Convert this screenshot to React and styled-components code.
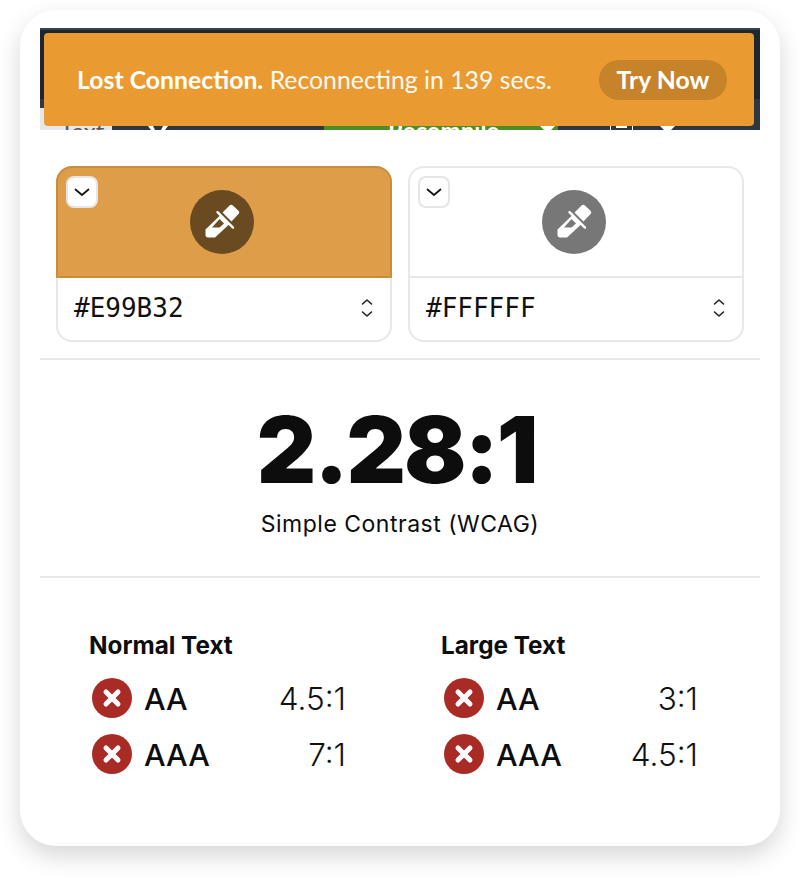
import styled, { createGlobalStyle } from "styled-components";

const GlobalStyle = createGlobalStyle`
  html, body {
    margin: 0;
    padding: 0;
    background: #fff;
  }
`;

const Page = styled.div`
  width: 800px;
  height: 878px;
  padding: 10px 20px 0;
  box-sizing: border-box;
  overflow: hidden;
  font-family: Inter, "Liberation Sans", sans-serif;
  color: #0d0d0d;
`;

const Card = styled.div`
  height: 836px;
  padding: 18px 20px 0;
  box-sizing: border-box;
  background: #fff;
  border-radius: 36px;
  box-shadow: 0 10px 24px rgba(0, 0, 0, 0.16);
`;

const ScreenshotStrip = styled.div`
  position: relative;
  height: 102px;
  overflow: hidden;
  background: linear-gradient(#3c4149 0 2px, #1e2630 2px 71px, #2f3742 71px);
`;

const FootBar = styled.div`
  position: absolute;
  left: 0;
  right: 0;
  bottom: 0;
  height: 22px;
  display: flex;
`;

const FootSegment = styled.div`
  width: ${(p) => p.$width}px;
  flex: ${(p) => (p.$grow ? "1" : "none")};
  height: 22px;
  padding: 18px 0 0 ${(p) => p.$inset || 0}px;
  box-sizing: border-box;
  display: flex;
  align-items: flex-start;
  overflow: hidden;
  background: ${(p) => p.$color};
`;

const FootLabel = styled.span`
  font-family: Lato, sans-serif;
  font-size: 24px;
  line-height: 10px;
  font-weight: ${(p) => p.$weight};
  color: ${(p) => p.$color};
  white-space: nowrap;
`;

const FootGap = styled.span`
  flex: none;
  width: ${(p) => p.$width}px;
`;

const Toast = styled.div`
  position: absolute;
  top: 5px;
  left: 4px;
  right: 6px;
  height: 93px;
  display: flex;
  align-items: center;
  justify-content: space-between;
  padding: 0 27px 0 33px;
  box-sizing: border-box;
  background: #e99b32;
  border-radius: 4px;
  font-family: Lato, sans-serif;
  font-size: 24.8px;
  color: #fff;
`;

const ToastText = styled.div`
  strong {
    font-weight: 700;
  }
  span {
    font-weight: 400;
    opacity: 0.95;
  }
`;

const TryNow = styled.div`
  width: 128px;
  height: 40px;
  display: flex;
  align-items: center;
  justify-content: center;
  border-radius: 20px;
  background: #c6832a;
  font-weight: 700;
`;

const Pickers = styled.div`
  display: grid;
  grid-template-columns: 336px 336px;
  gap: 16px;
  padding: 36px 16px 16px;
  border-bottom: 2px solid #e8e8e8;
`;

const Picker = styled.div`
  height: 176px;
  border: 2px solid #e8e8e8;
  border-radius: 16px;
  box-sizing: border-box;
  display: flex;
  flex-direction: column;
`;

const Swatch = styled.div`
  position: relative;
  flex: none;
  height: ${(p) => (p.$filled ? "112px" : "110px")};
  margin: ${(p) => (p.$filled ? "-2px -2px 0" : "0")};
  padding-right: 4px;
  display: flex;
  align-items: center;
  justify-content: center;
  box-sizing: border-box;
  background: ${(p) => (p.$filled ? "#de9d48" : "transparent")};
  border: ${(p) => (p.$filled ? "2px solid #c98c3c" : "none")};
  border-bottom: 2px solid ${(p) => (p.$filled ? "#c98c3c" : "#e8e8e8")};
  border-radius: ${(p) => (p.$filled ? "16px 16px 0 0" : "14px 14px 0 0")};
`;

const Toggle = styled.div`
  position: absolute;
  top: 8px;
  left: 8px;
  width: 32px;
  height: 32px;
  box-sizing: border-box;
  display: flex;
  align-items: center;
  justify-content: center;
  background: #fff;
  border: 2px solid #e6e6e6;
  border-radius: 8px;
`;

const Dropper = styled.div`
  width: 64px;
  height: 64px;
  border-radius: 50%;
  display: flex;
  align-items: center;
  justify-content: center;
  background: ${(p) => p.$color};
`;

const HexRow = styled.div`
  flex: 1;
  display: flex;
  align-items: center;
  justify-content: space-between;
  padding: 0 17px 2px 16px;
  font-family: "DejaVu Sans Mono", monospace;
  font-size: 26px;
  color: #111;
`;

const Ratio = styled.div`
  height: 216px;
  display: flex;
  flex-direction: column;
  align-items: center;
  border-bottom: 2px solid #e8e8e8;
`;

const RatioValue = styled.div`
  margin-top: 44px;
  padding-right: 7px;
  font-size: 92px;
  line-height: 92px;
  font-weight: 900;
  letter-spacing: -2px;
  color: #0d0d0d;
`;

const RatioLabel = styled.div`
  margin-top: 14px;
  font-size: 23px;
  line-height: 28px;
  letter-spacing: 0.5px;
`;

const Levels = styled.div`
  display: grid;
  grid-template-columns: 352px 260px;
  padding: 53px 0 0 49px;
`;

const Level = styled.div`
  width: 257px;
`;

const LevelTitle = styled.div`
  font-size: 24.3px;
  line-height: 28px;
  font-weight: 700;
  margin-bottom: 11px;
`;

const LevelRow = styled.div`
  height: 56px;
  display: flex;
  align-items: center;
  padding-left: 3px;
  font-size: 30.5px;
`;

const Grade = styled.span`
  margin-left: 12px;
  font-weight: 500;
`;

const Threshold = styled.span`
  margin-left: auto;
  font-size: 31.5px;
  font-weight: 300;
  color: #111;
`;

const Chevron = () => (
  <svg width="18" height="18" viewBox="0 0 18 18" fill="none" stroke="#111" strokeWidth="1.7" strokeLinecap="round" strokeLinejoin="round">
    <path d="M2.5 6.5 9 12l6.5-5.5" />
  </svg>
);

const UpDown = () => (
  <svg width="12" height="20" viewBox="0 0 12 20" fill="none" stroke="#222" strokeWidth="1.6" strokeLinecap="round" strokeLinejoin="round">
    <path d="M1.5 6 6 2l4.5 4M1.5 14 6 18l4.5-4" />
  </svg>
);

// drawn on a 48px square, the hollow part of the glass takes the circle colour
const PipetteIcon = ({ hollow }) => (
  <svg width="48" height="48" viewBox="0 0 48 48" fill="#fff">
    <path d="M24.5 14.5 31.5 7.5c1-1 2.4-1 3.4 0l5.6 5.2c1 1 1 2.4 0 3.4L33.5 23.5z" />
    <path d="M19.5 14.2 35 29.6" stroke="#fff" strokeWidth="2.4" strokeLinecap="round" />
    <path d="M22 17.5 31 26.5 17 39.5H10c-1.5 0-2.5-1-2.5-2.5V31.5z" />
    <path d="M21.5 21 26 25.5 21.5 29.5 14 29.5z" fill={hollow} />
  </svg>
);

const FailIcon = () => (
  <svg width="40" height="40" viewBox="0 0 40 40">
    <circle cx="20" cy="20" r="20" fill="#a92b26" />
    <path d="M14 14 26 26M26 14 14 26" stroke="#fff" strokeWidth="5" strokeLinecap="round" />
  </svg>
);

const VStubs = () => (
  <svg width="20" height="4" viewBox="0 0 20 4" fill="#fff">
    <path d="M0 0h5l2 4H3zM15 0h5l-3 4h-4z" />
  </svg>
);

const CaretStub = () => (
  <svg width="15" height="4" viewBox="0 0 15 4" fill="#fff">
    <path d="M0 0h15l-4 4H4z" />
  </svg>
);

const BoxStub = () => (
  <svg width="23" height="4" viewBox="0 0 23 4" fill="#fff">
    <path d="M0 0h1v4H0zM6 0h11v2H6zM22 0h1v4h-1z" />
  </svg>
);

const ColorPicker = ({ hex, filled, dropper }) => (
  <Picker>
    <Swatch $filled={filled}>
      <Toggle>
        <Chevron />
      </Toggle>
      <Dropper $color={dropper}>
        <PipetteIcon hollow={dropper} />
      </Dropper>
    </Swatch>
    <HexRow>
      {hex}
      <UpDown />
    </HexRow>
  </Picker>
);

const levels = [
  { title: "Normal Text", rows: [["AA", "4.5:1"], ["AAA", "7:1"]] },
  { title: "Large Text", rows: [["AA", "3:1"], ["AAA", "4.5:1"]] },
];

export default function App() {
  return (
    <Page>
      <GlobalStyle />
      <Card>
        <ScreenshotStrip>
          <FootBar>
            <FootSegment $width={72} $inset={20} $color="#e5e7eb">
              <FootLabel $weight={400} $color="#555">Text</FootLabel>
            </FootSegment>
            <FootSegment $width={212} $inset={36} $color="#2f3742">
              <VStubs />
            </FootSegment>
            <FootSegment $width={234} $inset={64} $color="#4a8f26">
              <FootLabel $weight={700} $color="#fff">Recompile</FootLabel>
              <FootGap $width={41} />
              <CaretStub />
            </FootSegment>
            <FootSegment $grow $inset={52} $color="#2f3742">
              <BoxStub />
              <FootGap $width={27} />
              <CaretStub />
            </FootSegment>
          </FootBar>
          <Toast>
            <ToastText>
              <strong>Lost Connection.</strong> <span>Reconnecting in 139 secs.</span>
            </ToastText>
            <TryNow>Try Now</TryNow>
          </Toast>
        </ScreenshotStrip>
        <Pickers>
          <ColorPicker hex="#E99B32" filled dropper="#694a21" />
          <ColorPicker hex="#FFFFFF" dropper="#777777" />
        </Pickers>
        <Ratio>
          <RatioValue>2.28:1</RatioValue>
          <RatioLabel>Simple Contrast (WCAG)</RatioLabel>
        </Ratio>
        <Levels>
          {levels.map((level) => (
            <Level key={level.title}>
              <LevelTitle>{level.title}</LevelTitle>
              {level.rows.map(([grade, threshold]) => (
                <LevelRow key={grade}>
                  <FailIcon />
                  <Grade>{grade}</Grade>
                  <Threshold>{threshold}</Threshold>
                </LevelRow>
              ))}
            </Level>
          ))}
        </Levels>
      </Card>
    </Page>
  );
}
